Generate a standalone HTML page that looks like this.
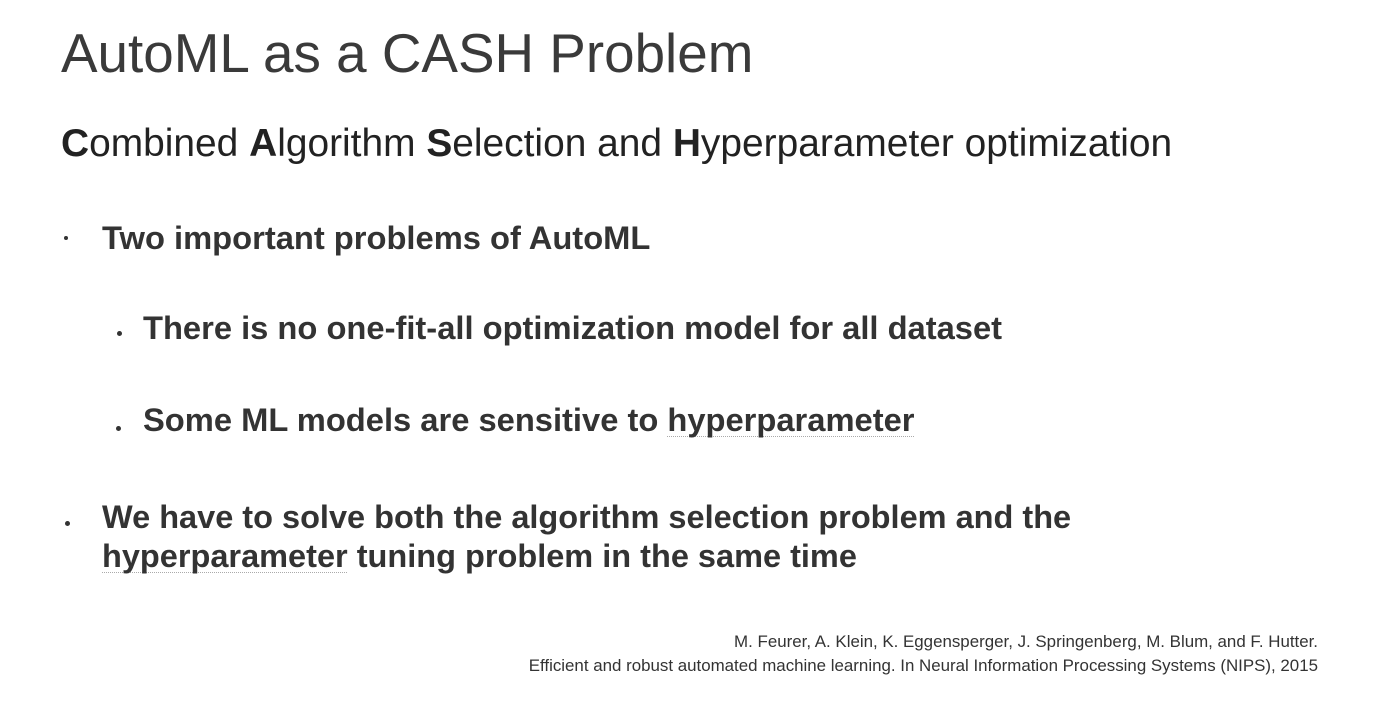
<!DOCTYPE html>
<html><head><style>
body{margin:0;width:1400px;height:724px;background:#fff;overflow:hidden;font-family:"Liberation Sans",Arial,sans-serif;color:#333;}
.t{position:absolute;white-space:nowrap;line-height:1;}
.b{font-weight:bold;}
.u{text-decoration:underline dotted #aaa;text-decoration-thickness:1px;text-underline-offset:5px;text-decoration-skip-ink:none;}
.dot{position:absolute;width:5px;height:5px;border-radius:50%;background:#333;}
</style></head><body>
<div class="t" style="left:61px;top:26px;font-size:54.8px;color:#3a3a3a;">AutoML as a CASH Problem</div>
<div class="t" style="left:61px;top:125px;font-size:38.9px;color:#222;"><b>C</b>ombined <b>A</b>lgorithm <b>S</b>election and <b>H</b>yperparameter optimization</div>
<div class="dot" style="left:64px;top:236px;width:4px;height:4px;"></div>
<div class="t b" style="left:102px;top:222px;font-size:32.7px;">Two important problems of AutoML</div>
<div class="dot" style="left:117px;top:331px;"></div>
<div class="t b" style="left:143px;top:312px;font-size:32.7px;">There is no one-fit-all optimization model for all dataset</div>
<div class="dot" style="left:116px;top:426px;"></div>
<div class="t b" style="left:143px;top:404px;font-size:32.7px;">Some ML models are sensitive to <span class="u">hyperparameter</span></div>
<div class="dot" style="left:65px;top:521px;"></div>
<div class="t b" style="left:102px;top:501px;font-size:32.5px;">We have to solve both the algorithm selection problem and the</div>
<div class="t b" style="left:102px;top:540px;font-size:32.5px;"><span class="u">hyperparameter</span> tuning problem in the same time</div>
<div class="t" style="right:82px;top:634px;font-size:16.9px;color:#333;text-align:right;">M. Feurer, A. Klein, K. Eggensperger, J. Springenberg, M. Blum, and F. Hutter.</div>
<div class="t" style="right:82px;top:658px;font-size:16.9px;color:#333;text-align:right;">Efficient and robust automated machine learning. In Neural Information Processing Systems (NIPS), 2015</div>
</body></html>
